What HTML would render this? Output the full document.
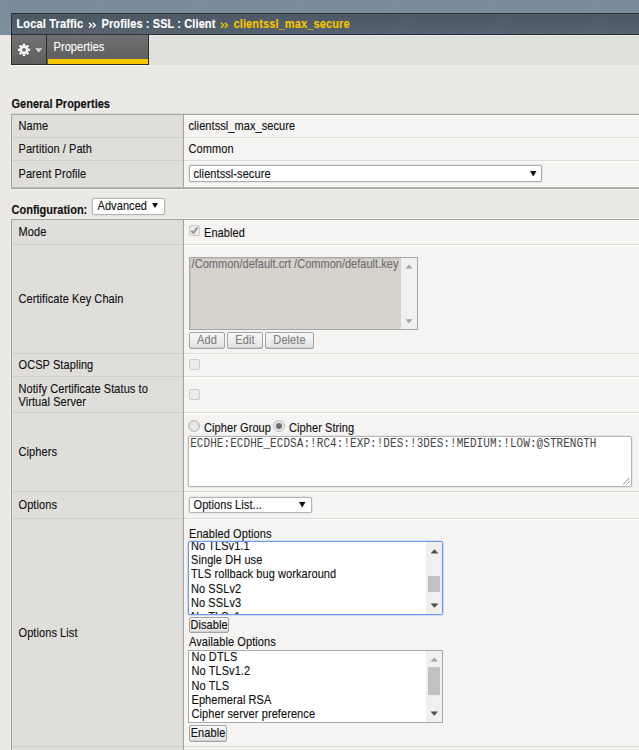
<!DOCTYPE html>
<html><head><meta charset="utf-8"><style>
*{margin:0;padding:0;box-sizing:border-box}
html,body{width:639px;height:750px;overflow:hidden;background:#ebe9e5;font-family:"Liberation Sans",sans-serif;font-size:11px;color:#111}
.t{letter-spacing:0.08px;-webkit-text-stroke:0.12px currentColor;transform:scaleY(1.1);transform-origin:0 10px}
.t,.b,.tb{position:absolute;white-space:nowrap;line-height:13px}
.bold{font-weight:bold;letter-spacing:0}
.m{font-family:"Liberation Mono",monospace}
</style></head><body>
<div class="b" style="left:0px;top:0px;width:639px;height:35px;background:repeating-linear-gradient(135deg,rgba(255,255,255,0.022) 0 1.5px,rgba(0,0,0,0) 1.5px 3.5px),linear-gradient(#77899a,#7c8f9b)"></div>
<div class="b" style="left:11px;top:13px;width:628px;height:22px;background:repeating-linear-gradient(135deg,rgba(255,255,255,0.018) 0 1.5px,rgba(0,0,0,0) 1.5px 3.5px),linear-gradient(#4a5662,#55626d);border:1px solid #2b3034;border-right:0"></div>
<div class="t bold" style="left:16.5px;top:18px;color:#fff;letter-spacing:0.15px">Local Traffic</div>
<svg class="b" style="left:88px;top:22px" width="9" height="7"><path d="M1 0.8L3.6 3.3L1 5.8M4.8 0.8L7.4 3.3L4.8 5.8" stroke="#fff" stroke-width="1.35" fill="none"/></svg>
<div class="t bold" style="left:101.5px;top:18px;color:#fff;letter-spacing:0.1px">Profiles : SSL : Client</div>
<svg class="b" style="left:220px;top:22px" width="9" height="7"><path d="M1 0.8L3.6 3.3L1 5.8M4.8 0.8L7.4 3.3L4.8 5.8" stroke="#f5c500" stroke-width="1.35" fill="none"/></svg>
<div class="t bold" style="left:233.5px;top:18px;color:#f5c500;letter-spacing:0.12px">clientssl_max_secure</div>
<div class="b" style="left:11px;top:35px;width:628px;height:30px;background:#e0dfdb"></div>
<div class="b" style="left:11px;top:35px;width:36px;height:30px;background:linear-gradient(#727272,#5f5f5f);border-left:1px solid #2e2e2e;border-right:1px solid #2e2e2e;border-bottom:1px solid #2e2e2e"></div>
<div class="b" style="left:47px;top:35px;width:102px;height:30px;background:linear-gradient(#717171,#5b5b5b);border-right:1px solid #2e2e2e;border-bottom:1px solid #2e2e2e"></div>
<div class="b" style="left:48px;top:59px;width:100px;height:5px;background:#f9c700"></div>
<div class="t" style="left:53.5px;top:41px;color:#fff">Properties</div>
<div class="b" style="left:149px;top:35px;width:490px;height:1px;background:#e9e8e4"></div>
<div class="b" style="left:149px;top:39px;width:214px;height:1px;background:#e5e4e0"></div>
<div class="b" style="left:11px;top:65px;width:138px;height:1px;background:#f7f6f3"></div>
<svg class="b" style="left:16px;top:42px" width="16" height="16" viewBox="-8 -8 16 16"><g transform="translate(0,-0.2)"><g fill="none" stroke="rgba(0,0,0,0.35)" stroke-width="1.2"><rect x="-1.35" y="-6.3" width="2.7" height="3" transform="rotate(0)"/><rect x="-1.35" y="-6.3" width="2.7" height="3" transform="rotate(45)"/><rect x="-1.35" y="-6.3" width="2.7" height="3" transform="rotate(90)"/><rect x="-1.35" y="-6.3" width="2.7" height="3" transform="rotate(135)"/><rect x="-1.35" y="-6.3" width="2.7" height="3" transform="rotate(180)"/><rect x="-1.35" y="-6.3" width="2.7" height="3" transform="rotate(225)"/><rect x="-1.35" y="-6.3" width="2.7" height="3" transform="rotate(270)"/><rect x="-1.35" y="-6.3" width="2.7" height="3" transform="rotate(315)"/><circle r="4.7"/></g><g fill="#f0f0f0"><rect x="-1.35" y="-6.3" width="2.7" height="3" transform="rotate(0)"/><rect x="-1.35" y="-6.3" width="2.7" height="3" transform="rotate(45)"/><rect x="-1.35" y="-6.3" width="2.7" height="3" transform="rotate(90)"/><rect x="-1.35" y="-6.3" width="2.7" height="3" transform="rotate(135)"/><rect x="-1.35" y="-6.3" width="2.7" height="3" transform="rotate(180)"/><rect x="-1.35" y="-6.3" width="2.7" height="3" transform="rotate(225)"/><rect x="-1.35" y="-6.3" width="2.7" height="3" transform="rotate(270)"/><rect x="-1.35" y="-6.3" width="2.7" height="3" transform="rotate(315)"/><circle r="4.7"/></g><circle r="1.9" fill="#6b6b6b"/></g></svg>
<svg class="b" style="left:35px;top:48px" width="8" height="5"><path d="M0 0.3H7.5L3.75 4.6Z" fill="#d8d8d8"/></svg>
<div class="t bold" style="left:11.5px;top:98px;">General Properties</div>
<div class="b" style="left:11px;top:114px;width:628px;height:75px;background:#f5f4f2"></div>
<div class="b" style="left:11px;top:114px;width:173px;height:75px;background:#dfdedb"></div>
<div class="b" style="left:11px;top:114px;width:1px;height:75px;background:#a0a09e"></div>
<div class="b" style="left:10px;top:114px;width:1px;height:75px;background:#f2f1ed"></div>
<div class="b" style="left:183px;top:114px;width:1px;height:75px;background:#a2a2a0"></div>
<div class="b" style="left:11px;top:113px;width:628px;height:1px;background:#dcdbd7"></div>
<div class="b" style="left:11px;top:114px;width:628px;height:1px;background:#a4a3a0"></div>
<div class="b" style="left:184px;top:115px;width:455px;height:1px;background:#fcfcfb"></div>
<div class="b" style="left:12px;top:137px;width:171px;height:1px;background:#d0cecb"></div>
<div class="b" style="left:184px;top:137px;width:455px;height:1px;background:#dcdbd8"></div>
<div class="b" style="left:12px;top:160px;width:171px;height:1px;background:#d0cecb"></div>
<div class="b" style="left:184px;top:160px;width:455px;height:1px;background:#dcdbd8"></div>
<div class="b" style="left:184px;top:138px;width:455px;height:1px;background:#fbfbfa"></div>
<div class="b" style="left:184px;top:161px;width:455px;height:1px;background:#fbfbfa"></div>
<div class="b" style="left:11px;top:187px;width:628px;height:1px;background:#b6b5b2"></div>
<div class="b" style="left:11px;top:188px;width:628px;height:1px;background:#a6a5a2"></div>
<div class="b" style="left:11px;top:189px;width:628px;height:1px;background:#f3f2ee"></div>
<div class="t" style="left:18.5px;top:120px;">Name</div>
<div class="t" style="left:188.5px;top:120px;">clientssl_max_secure</div>
<div class="t" style="left:18.5px;top:143px;">Partition / Path</div>
<div class="t" style="left:188.5px;top:143px;">Common</div>
<div class="t" style="left:18.5px;top:168px;">Parent Profile</div>
<div class="b" style="left:189px;top:165px;width:353px;height:17px;background:#fff;border:1px solid #adadad;border-radius:2px;box-shadow:0 0 0 0.5px #d8d8d8"></div>
<div class="t" style="left:193.5px;top:168px;">clientssl-secure</div>
<svg class="b" style="left:530px;top:171px" width="7" height="6"><path d="M0 0H6.5L3.25 5.5Z" fill="#111"/></svg>
<div class="t bold" style="left:11.5px;top:204px;">Configuration:</div>
<div class="b" style="left:92px;top:198px;width:73px;height:17px;background:#fff;border:1px solid #b4b4b4;border-radius:2px;box-shadow:0 0 0 0.5px #d8d8d8"></div>
<div class="t" style="left:97.5px;top:200px;">Advanced</div>
<svg class="b" style="left:152px;top:203px" width="7" height="6"><path d="M0 0H6L3 5Z" fill="#111"/></svg>
<div class="b" style="left:11px;top:219px;width:628px;height:531px;background:#f5f4f2"></div>
<div class="b" style="left:11px;top:219px;width:173px;height:531px;background:#dfdedb"></div>
<div class="b" style="left:11px;top:219px;width:1px;height:531px;background:#a0a09e"></div>
<div class="b" style="left:10px;top:219px;width:1px;height:531px;background:#f2f1ed"></div>
<div class="b" style="left:183px;top:219px;width:1px;height:531px;background:#a2a2a0"></div>
<div class="b" style="left:11px;top:218px;width:628px;height:1px;background:#f1f0ec"></div>
<div class="b" style="left:11px;top:219px;width:628px;height:1px;background:#a4a3a0"></div>
<div class="b" style="left:184px;top:220px;width:455px;height:1px;background:#fcfcfb"></div>
<div class="b" style="left:12px;top:244px;width:171px;height:1px;background:#d0cecb"></div>
<div class="b" style="left:184px;top:244px;width:455px;height:1px;background:#dcdbd8"></div>
<div class="b" style="left:184px;top:245px;width:455px;height:1px;background:#fbfbfa"></div>
<div class="b" style="left:12px;top:353px;width:171px;height:1px;background:#d0cecb"></div>
<div class="b" style="left:184px;top:353px;width:455px;height:1px;background:#dcdbd8"></div>
<div class="b" style="left:184px;top:354px;width:455px;height:1px;background:#fbfbfa"></div>
<div class="b" style="left:12px;top:376px;width:171px;height:1px;background:#d0cecb"></div>
<div class="b" style="left:184px;top:376px;width:455px;height:1px;background:#dcdbd8"></div>
<div class="b" style="left:184px;top:377px;width:455px;height:1px;background:#fbfbfa"></div>
<div class="b" style="left:12px;top:412px;width:171px;height:1px;background:#d0cecb"></div>
<div class="b" style="left:184px;top:412px;width:455px;height:1px;background:#dcdbd8"></div>
<div class="b" style="left:184px;top:413px;width:455px;height:1px;background:#fbfbfa"></div>
<div class="b" style="left:12px;top:491px;width:171px;height:1px;background:#d0cecb"></div>
<div class="b" style="left:184px;top:491px;width:455px;height:1px;background:#dcdbd8"></div>
<div class="b" style="left:184px;top:492px;width:455px;height:1px;background:#fbfbfa"></div>
<div class="b" style="left:12px;top:518px;width:171px;height:1px;background:#d0cecb"></div>
<div class="b" style="left:184px;top:518px;width:455px;height:1px;background:#dcdbd8"></div>
<div class="b" style="left:184px;top:519px;width:455px;height:1px;background:#fbfbfa"></div>
<div class="b" style="left:12px;top:746px;width:171px;height:1px;background:#d0cecb"></div>
<div class="b" style="left:184px;top:746px;width:455px;height:1px;background:#dcdbd8"></div>
<div class="t" style="left:18.5px;top:226px;">Mode</div>
<div class="b" style="left:189px;top:225px;width:11px;height:11px;background:#ebebeb;border:1px solid #cdcdcd;border-radius:2px"></div>
<svg class="b" style="left:189px;top:225px" width="11" height="11"><path d="M2.3 5.6L4.4 7.9L8.6 2.3" stroke="#999" stroke-width="2.1" fill="none"/></svg>
<div class="t" style="left:204px;top:227px;">Enabled</div>
<div class="t" style="left:18.5px;top:293px;">Certificate Key Chain</div>
<div class="b" style="left:189px;top:257px;width:229px;height:73px;background:#d6d2cc;border:1px solid #a9a9a9;box-shadow:inset 1px 1px 0 #c4c1bc"></div>
<div class="b" style="left:401px;top:258px;width:16px;height:71px;background:#f0f0f0"></div>
<svg class="b" style="left:405px;top:264px" width="8" height="5"><path d="M0.5 4.4H7.5L4 0.4Z" fill="#a3a3a3"/></svg>
<svg class="b" style="left:405px;top:319px" width="8" height="5"><path d="M0.5 0.3H7.5L4 4.3Z" fill="#a3a3a3"/></svg>
<div class="b" style="left:190px;top:258px;width:211px;height:71px;overflow:hidden"><div class="t" style="left:1.6px;top:0px;color:#6e6e6e;letter-spacing:0.02px">/Common/default.crt /Common/default.key</div></div>
<div class="b" style="left:189px;top:332px;width:36px;height:17px;background:linear-gradient(#f7f7f7,#e2e2e2);border:1px solid #a4a4a4;border-radius:2px;box-shadow:inset 0 -1px 0 #d0d0d0"></div>
<div class="t" style="left:189px;top:334px;width:36px;text-align:center;color:#808080">Add</div>
<div class="b" style="left:227px;top:332px;width:36px;height:17px;background:linear-gradient(#f7f7f7,#e2e2e2);border:1px solid #a4a4a4;border-radius:2px;box-shadow:inset 0 -1px 0 #d0d0d0"></div>
<div class="t" style="left:227px;top:334px;width:36px;text-align:center;color:#808080">Edit</div>
<div class="b" style="left:265px;top:332px;width:49px;height:17px;background:linear-gradient(#f7f7f7,#e2e2e2);border:1px solid #a4a4a4;border-radius:2px;box-shadow:inset 0 -1px 0 #d0d0d0"></div>
<div class="t" style="left:265px;top:334px;width:49px;text-align:center;color:#808080">Delete</div>
<div class="t" style="left:18.5px;top:359px;">OCSP Stapling</div>
<div class="b" style="left:189px;top:359px;width:11px;height:11px;background:#ebebeb;border:1px solid #cdcdcd;border-radius:2px"></div>
<div class="t" style="left:18.5px;top:383px;">Notify Certificate Status to</div>
<div class="t" style="left:18.5px;top:396px;">Virtual Server</div>
<div class="b" style="left:189px;top:389px;width:11px;height:11px;background:#ebebeb;border:1px solid #cdcdcd;border-radius:2px"></div>
<div class="t" style="left:18.5px;top:446px;">Ciphers</div>
<div class="b" style="left:188px;top:420px;width:12px;height:12px;background:radial-gradient(#eee,#d8d8d8);border:1px solid #bdbdbd;border-radius:50%"></div>
<div class="t" style="left:204px;top:422px;">Cipher Group</div>
<div class="b" style="left:273px;top:420px;width:12px;height:12px;background:#e8e8e8;border:1px solid #bdbdbd;border-radius:50%"></div>
<div class="b" style="left:276px;top:423px;width:6px;height:6px;background:#6f6f6f;border-radius:50%"></div>
<div class="t" style="left:289px;top:422px;">Cipher String</div>
<div class="b" style="left:188px;top:436px;width:444px;height:51px;background:#fff;border:1px solid #b5b5b5;border-radius:2px;box-shadow:0 0 0 0.5px #dadada"></div>
<div class="t m" style="left:190.2px;top:438px;color:#444;-webkit-text-stroke:0;letter-spacing:0.06px">ECDHE:ECDHE_ECDSA:!RC4:!EXP:!DES:!3DES:!MEDIUM:!LOW:@STRENGTH</div>
<svg class="b" style="left:622px;top:477px" width="8" height="8"><path d="M7.5 1L1 7.5M7.5 4.5L4.5 7.5" stroke="#8a8a8a" stroke-width="1" fill="none"/></svg>
<div class="t" style="left:18.5px;top:499px;">Options</div>
<div class="b" style="left:189px;top:497px;width:123px;height:16px;background:#fff;border:1px solid #b4b4b4;border-radius:2px;box-shadow:0 0 0 0.5px #d8d8d8"></div>
<div class="t" style="left:193.5px;top:499px;">Options List...</div>
<svg class="b" style="left:299px;top:502px" width="7" height="6"><path d="M0 0H6.5L3.25 5.5Z" fill="#111"/></svg>
<div class="t" style="left:18.5px;top:627px;">Options List</div>
<div class="t" style="left:189px;top:528px;">Enabled Options</div>
<div class="b" style="left:188px;top:541px;width:255px;height:74px;background:#fff;border:1px solid #6b99e6;border-radius:2px;box-shadow:0 0 0 0.6px rgba(120,160,230,0.55)"></div>
<div class="b" style="left:426px;top:542px;width:16px;height:72px;background:#f0f0f0"></div>
<div class="b" style="left:428px;top:576px;width:12px;height:16px;background:#c1c1c1"></div>
<svg class="b" style="left:430px;top:549px" width="9" height="5"><path d="M0.5 4.6H8.5L4.5 0.3Z" fill="#505050"/></svg>
<svg class="b" style="left:430px;top:603px" width="9" height="5"><path d="M0.5 0.4H8.5L4.5 4.7Z" fill="#505050"/></svg>
<div class="b" style="left:189px;top:542px;width:237px;height:72px;overflow:hidden">
<div class="t" style="left:2px;top:-2.0px">No TLSv1.1</div>
<div class="t" style="left:2px;top:12.2px">Single DH use</div>
<div class="t" style="left:2px;top:26.4px">TLS rollback bug workaround</div>
<div class="t" style="left:2px;top:40.6px">No SSLv2</div>
<div class="t" style="left:2px;top:54.8px">No SSLv3</div>
<div class="t" style="left:2px;top:69.0px">No TLSv1</div>
</div>
<div class="b" style="left:189px;top:617px;width:40px;height:16px;background:linear-gradient(#f7f7f7,#e2e2e2);border:1px solid #a4a4a4;border-radius:2px;box-shadow:inset 0 -1px 0 #d0d0d0"></div>
<div class="t" style="left:189px;top:619px;width:40px;text-align:center;color:#111">Disable</div>
<div class="t" style="left:189px;top:636px;">Available Options</div>
<div class="b" style="left:188px;top:650px;width:255px;height:73px;background:#fff;border:1px solid #a9a9a9"></div>
<div class="b" style="left:426px;top:651px;width:16px;height:71px;background:#f0f0f0"></div>
<div class="b" style="left:428px;top:667px;width:12px;height:28px;background:#c1c1c1"></div>
<svg class="b" style="left:430px;top:657px" width="9" height="5"><path d="M0.5 4.4H8L4.25 0.4Z" fill="#a3a3a3"/></svg>
<svg class="b" style="left:430px;top:711px" width="9" height="5"><path d="M0.5 0.6H8L4.25 4.8Z" fill="#505050"/></svg>
<div class="t" style="left:191.5px;top:651px;">No DTLS</div>
<div class="t" style="left:191.5px;top:665px;">No TLSv1.2</div>
<div class="t" style="left:191.5px;top:680px;">No TLS</div>
<div class="t" style="left:191.5px;top:694px;">Ephemeral RSA</div>
<div class="t" style="left:191.5px;top:708px;">Cipher server preference</div>
<div class="b" style="left:189px;top:725px;width:38px;height:17px;background:linear-gradient(#f7f7f7,#e2e2e2);border:1px solid #a4a4a4;border-radius:2px;box-shadow:inset 0 -1px 0 #d0d0d0"></div>
<div class="t" style="left:189px;top:727px;width:38px;text-align:center;color:#111">Enable</div>
</body></html>
